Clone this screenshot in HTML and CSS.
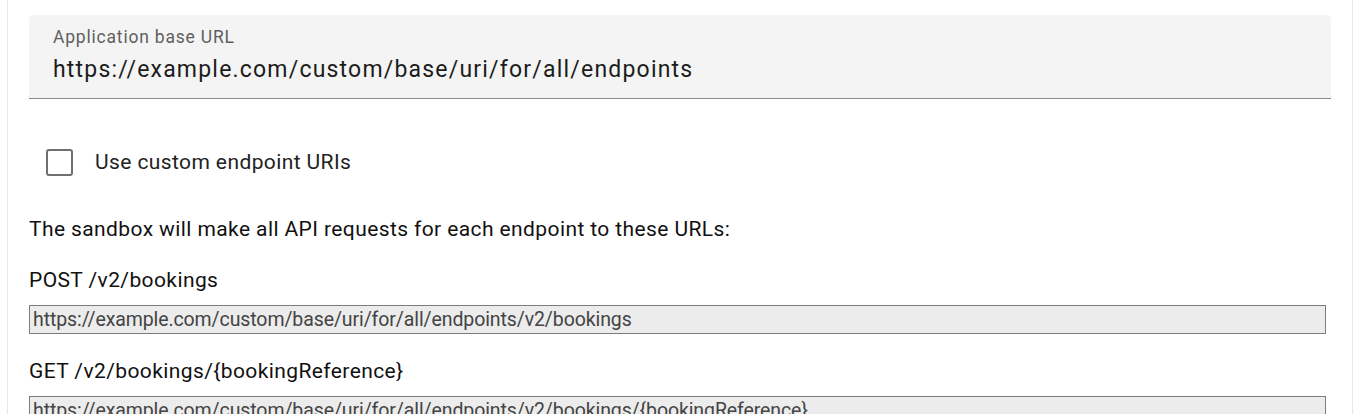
FILE: index.html
```html
<!DOCTYPE html>
<html>
<head>
<meta charset="utf-8">
<link rel="stylesheet" href="styles.css">
</head>
<body>
<div class="card">
  <div class="field">
    <label class="field-label">Application base URL</label>
    <div class="field-value">https://example.com/custom/base/uri/for/all/endpoints</div>
  </div>
  <label class="check-row">
    <span class="checkbox"></span>
    <span class="check-label">Use custom endpoint URIs</span>
  </label>
  <p class="intro">The sandbox will make all API requests for each endpoint to these URLs:</p>
  <div class="endpoint">
    <div class="ep-label">POST /v2/bookings</div>
    <input class="ep-input" type="text" readonly value="https://example.com/custom/base/uri/for/all/endpoints/v2/bookings">
  </div>
  <div class="endpoint">
    <div class="ep-label">GET /v2/bookings/{bookingReference}</div>
    <input class="ep-input" type="text" readonly value="https://example.com/custom/base/uri/for/all/endpoints/v2/bookings/{bookingReference}">
  </div>
</div>
</body>
</html>
```
FILE: styles.css
```css
html, body {
  margin: 0;
  padding: 0;
  background: #ffffff;
}
body {
  font-family: Roboto, "Liberation Sans", sans-serif;
  color: #1f1f1f;
  overflow: hidden;
}
.card {
  margin-left: 7px;
  width: 1346px;
  box-sizing: border-box;
  border-left: 1px solid #e6e6e6;
  border-right: 1px solid #e6e6e6;
  padding: 15px 21px 40px 21px;
  display: flex;
  flex-direction: column;
}
.field {
  background: #f4f4f4;
  border-radius: 5px 5px 0 0;
  border-bottom: 1px solid #8a8a8a;
  height: 84px;
  padding: 12px 24px 0 24px;
  box-sizing: border-box;
  display: flex;
  flex-direction: column;
}
.field-label {
  font-size: 17.5px;
  line-height: 20px;
  color: #5f5f5f;
  letter-spacing: 0.8px;
}
.field-value {
  margin-top: 8px;
  font-size: 23px;
  line-height: 30px;
  color: #1c1c1c;
  letter-spacing: 1.2px;
}
.check-row {
  display: flex;
  align-items: center;
  margin-top: 49px;
  margin-left: 17px;
  height: 28px;
}
.checkbox {
  width: 27px;
  height: 27px;
  box-sizing: border-box;
  border: 2px solid #707070;
  border-radius: 3px;
}
.check-label {
  margin-left: 22px;
  font-size: 21px;
  color: #222;
  letter-spacing: 0.4px;
}
.intro {
  margin: 39px 0 0 0;
  font-size: 21px;
  line-height: 28px;
  color: #111;
  letter-spacing: 0.4px;
}
.endpoint {
  display: flex;
  flex-direction: column;
  margin-top: 23px;
}
.endpoint + .endpoint {
  margin-top: 23px;
}
.ep-label {
  font-size: 21px;
  line-height: 28px;
  color: #111;
  letter-spacing: 0.4px;
}
.ep-input {
  margin-top: 11px;
  width: 1297px;
  height: 29px;
  box-sizing: border-box;
  border: 1px solid #7c7c7c;
  background: #ececec;
  padding: 0 3px;
  font-family: Roboto, "Liberation Sans", sans-serif;
  font-size: 19.5px;
  letter-spacing: -0.1px;
  color: #444;
  outline: none;
}
```
